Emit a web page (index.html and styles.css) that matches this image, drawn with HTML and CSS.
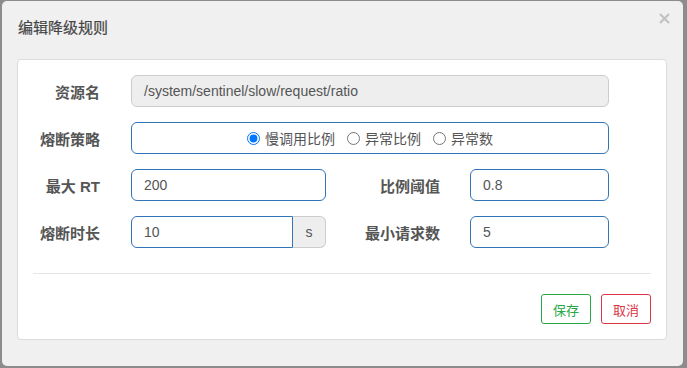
FILE: index.html
```html
<!DOCTYPE html>
<html lang="zh">
<head>
<meta charset="utf-8">
<title>编辑降级规则</title>
<link rel="stylesheet" href="styles.css">
</head>
<body>
<div class="dialog">
  <div class="dlg-header">
    <div class="dlg-title">编辑降级规则</div>
    <span class="dlg-close" aria-label="close">
      <svg width="11" height="11" viewBox="0 0 11 11"><path d="M1 1L10 10M10 1L1 10" stroke="#c2c2c2" stroke-width="2.2" stroke-linecap="butt"/></svg>
    </span>
  </div>
  <div class="panel">
    <div class="form-grid">
      <label class="lbl">资源名</label>
      <div class="ctrl ctrl-full ctrl-readonly">/system/sentinel/slow/request/ratio</div>

      <label class="lbl">熔断策略</label>
      <div class="ctrl ctrl-full radios">
        <label class="radio"><input type="radio" name="grade" checked><span>慢调用比例</span></label>
        <label class="radio"><input type="radio" name="grade"><span>异常比例</span></label>
        <label class="radio"><input type="radio" name="grade"><span>异常数</span></label>
      </div>

      <label class="lbl">最大 RT</label>
      <div class="ctrl">200</div>
      <label class="lbl lbl-right">比例阈值</label>
      <div class="ctrl">0.8</div>

      <label class="lbl">熔断时长</label>
      <div class="group">
        <div class="ctrl ctrl-left">10</div>
        <div class="addon">s</div>
      </div>
      <label class="lbl lbl-right">最小请求数</label>
      <div class="ctrl">5</div>
    </div>
    <div class="divider"></div>
    <div class="footer">
      <button class="btn btn-save">保存</button>
      <button class="btn btn-cancel">取消</button>
    </div>
  </div>
</div>
</body>
</html>
```
FILE: styles.css
```css
html, body {
  margin: 0;
  padding: 0;
}
body {
  background: #8c8c8c;
  width: 687px;
  height: 368px;
  overflow: hidden;
  font-family: "Liberation Sans", "Noto Sans CJK SC", sans-serif;
  color: #555;
}
.dialog {
  margin: 1px 0 0 2px;
  width: 681px;
  height: 365px;
  background: #f0f0f0;
  border-radius: 5px;
  box-sizing: border-box;
}
.dlg-header {
  height: 58px;
  display: flex;
  align-items: flex-start;
  padding: 0 13px 0 16px;
  box-sizing: border-box;
}
.dlg-title {
  font-size: 15px;
  line-height: 20px;
  padding-top: 16px;
  color: #444;
  font-family: "Noto Sans CJK SC", sans-serif;
  -webkit-text-stroke: 0.2px #444;
}
.dlg-close {
  margin-left: auto;
  margin-top: 12px;
  display: flex;
}
.panel {
  margin-left: 15px;
  width: 650px;
  background: #fff;
  border: 1px solid #dcdcdc;
  border-radius: 4px;
  box-sizing: border-box;
  padding: 15px 0 15px 0;
}
.form-grid {
  display: grid;
  grid-template-columns: 113px 195px 144px 139px;
  grid-auto-rows: 32px;
  row-gap: 15px;
}
.lbl {
  font-size: 15px;
  font-weight: bold;
  color: #555;
  text-align: right;
  display: flex;
  align-items: center;
  justify-content: flex-end;
  padding-right: 31px;
}
.lbl-right {
  padding-right: 30px;
}
.ctrl {
  border: 1px solid #3274b8;
  border-radius: 6px;
  box-sizing: border-box;
  height: 32px;
  display: flex;
  align-items: center;
  padding: 0 12px;
  font-size: 14px;
  color: #555;
  background: #fff;
}
.ctrl-full {
  grid-column: 2 / span 3;
}
.ctrl-readonly {
  background: #eeeeee;
  border-color: #cccccc;
}
.radios {
  justify-content: center;
  gap: 12px;
  padding-left: 12px;
}
.radio {
  display: flex;
  align-items: center;
  font-family: "Noto Sans CJK SC", sans-serif;
  font-size: 14px;
  color: #555;
}
.radio input {
  margin: 1px 5px 0 0;
  width: 13px;
  height: 13px;
}
.group {
  display: flex;
}
.ctrl-left {
  flex: 1;
  border-radius: 6px 0 0 6px;
}
.addon {
  width: 33px;
  height: 32px;
  box-sizing: border-box;
  background: #eee;
  border: 1px solid #ccc;
  border-left: none;
  border-radius: 0 6px 6px 0;
  display: flex;
  align-items: center;
  justify-content: center;
  font-size: 14px;
  color: #555;
}
.divider {
  margin: 25px 15px 0;
  border-top: 1px solid #e5e5e5;
}
.footer {
  display: flex;
  justify-content: flex-end;
  gap: 10px;
  padding: 20px 15px 0;
}
.btn {
  height: 30px;
  padding: 0 10px;
  background: #fff;
  border-radius: 3px;
  font-family: "Noto Sans CJK SC", sans-serif;
  font-size: 13px;
  box-sizing: border-box;
  width: 50px;
}
.btn-save {
  border: 1px solid #28a745;
  color: #28a745;
}
.btn-cancel {
  border: 1px solid #dc3545;
  color: #dc3545;
}
```
